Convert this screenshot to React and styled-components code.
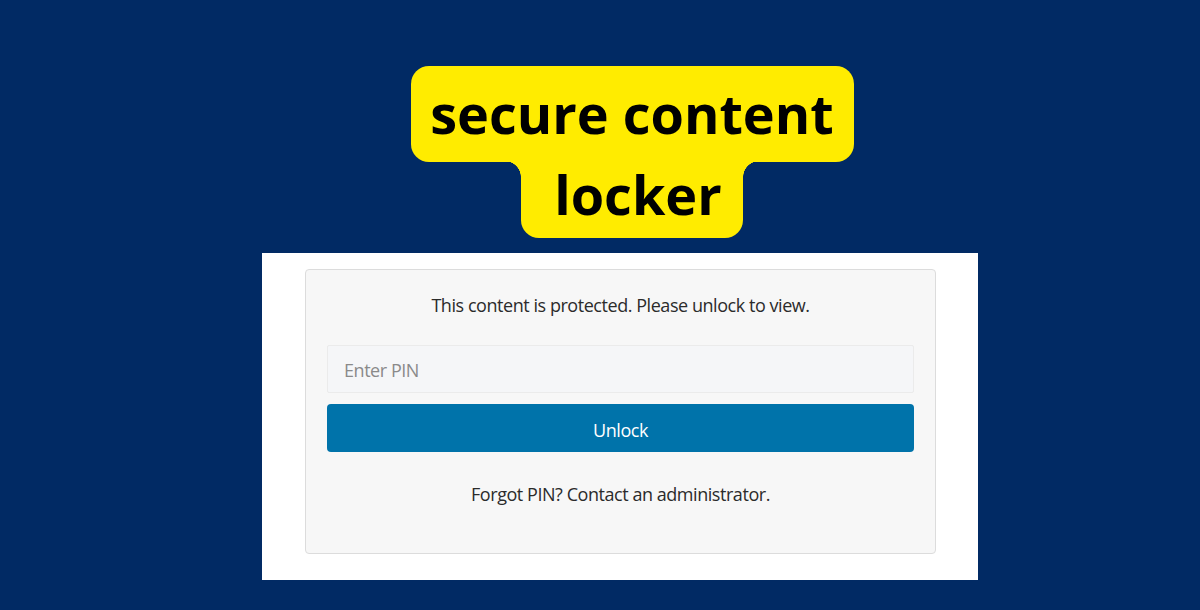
import React from "react";
import styled, { createGlobalStyle } from "styled-components";

const Global = createGlobalStyle`
  html, body { margin: 0; padding: 0; }
  body { background: #012a64; font-family: "Open Sans", "Noto Sans", sans-serif; }
`;

const Page = styled.div`
  width: 1200px;
  height: 610px;
  box-sizing: border-box;
  padding: 66px 0 0 40px;
  display: flex;
  flex-direction: column;
  align-items: center;
  background: #012a64;
  overflow: hidden;
`;

const Title = styled.h1`
  margin: 0 0 15px 24px;
  display: flex;
  flex-direction: column;
  align-items: center;
  font-family: "Open Sans", "Noto Sans", sans-serif;
  font-weight: 700;
  font-size: 54px;
  color: #000;
  letter-spacing: 0;
`;

const TitleTop = styled.span`
  display: flex;
  align-items: center;
  justify-content: center;
  width: 443px;
  height: 96px;
  box-sizing: border-box;
  padding-bottom: 2px;
  background: #ffec00;
  border-radius: 18px;
  line-height: 1;
`;

const TitleBottom = styled.span`
  position: relative;
  display: flex;
  align-items: center;
  justify-content: center;
  width: 222px;
  height: 77px;
  box-sizing: border-box;
  padding: 0 0 12px 12px;
  margin-top: -1px;
  background: #ffec00;
  border-radius: 0 0 18px 18px;
  line-height: 1;

  &::before,
  &::after {
    content: "";
    position: absolute;
    top: 0;
    width: 16px;
    height: 16px;
  }
  &::before {
    left: -16px;
    background: radial-gradient(circle at 0 100%, transparent 15.5px, #ffec00 16px);
  }
  &::after {
    right: -16px;
    background: radial-gradient(circle at 100% 100%, transparent 15.5px, #ffec00 16px);
  }
`;

const Panel = styled.section`
  width: 716px;
  height: 327px;
  box-sizing: border-box;
  background: #ffffff;
  padding: 16px 42px 26px 43px;
`;

const Card = styled.div`
  box-sizing: border-box;
  height: 285px;
  background: #f7f7f7;
  border: 1px solid #dcdcdc;
  border-radius: 4px;
  padding: 23px 21px 0;
  display: flex;
  flex-direction: column;
`;

const Text = styled.p`
  margin: 0 0 ${(p) => p.$mb || 0}px;
  margin-top: ${(p) => p.$mt || 0}px;
  text-align: center;
  font-size: 18px;
  letter-spacing: -0.45px;
  line-height: 24px;
  color: #2b2b2b;
  font-family: "Open Sans", "Noto Sans", sans-serif;
`;

const Input = styled.input`
  box-sizing: border-box;
  width: 100%;
  height: 48px;
  margin: 0 0 11px;
  padding: 2px 16px 0;
  background: #f5f6f8;
  border: 1px solid #ebebeb;
  border-radius: 2px;
  font-family: "Open Sans", "Noto Sans", sans-serif;
  font-size: 18px;
  letter-spacing: -0.45px;
  color: #333;
  outline: none;
  &::placeholder { color: #8a8a8a; }
`;

const Button = styled.button`
  box-sizing: border-box;
  width: 100%;
  height: 48px;
  padding: 3px 0 0;
  border: none;
  border-radius: 4px;
  background: #0073aa;
  color: #ffffff;
  font-family: "Open Sans", "Noto Sans", sans-serif;
  font-size: 18px;
  letter-spacing: -0.45px;
  cursor: pointer;
`;

export default function App() {
  return (
    <>
      <Global />
      <Page>
        <Title>
          <TitleTop>secure content</TitleTop>
          <TitleBottom>locker</TitleBottom>
        </Title>
        <Panel>
          <Card>
            <Text $mb={28}>This content is protected. Please unlock to view.</Text>
            <Input type="password" placeholder="Enter PIN" />
            <Button type="button">Unlock</Button>
            <Text $mt={30}>Forgot PIN? Contact an administrator.</Text>
          </Card>
        </Panel>
      </Page>
    </>
  );
}
